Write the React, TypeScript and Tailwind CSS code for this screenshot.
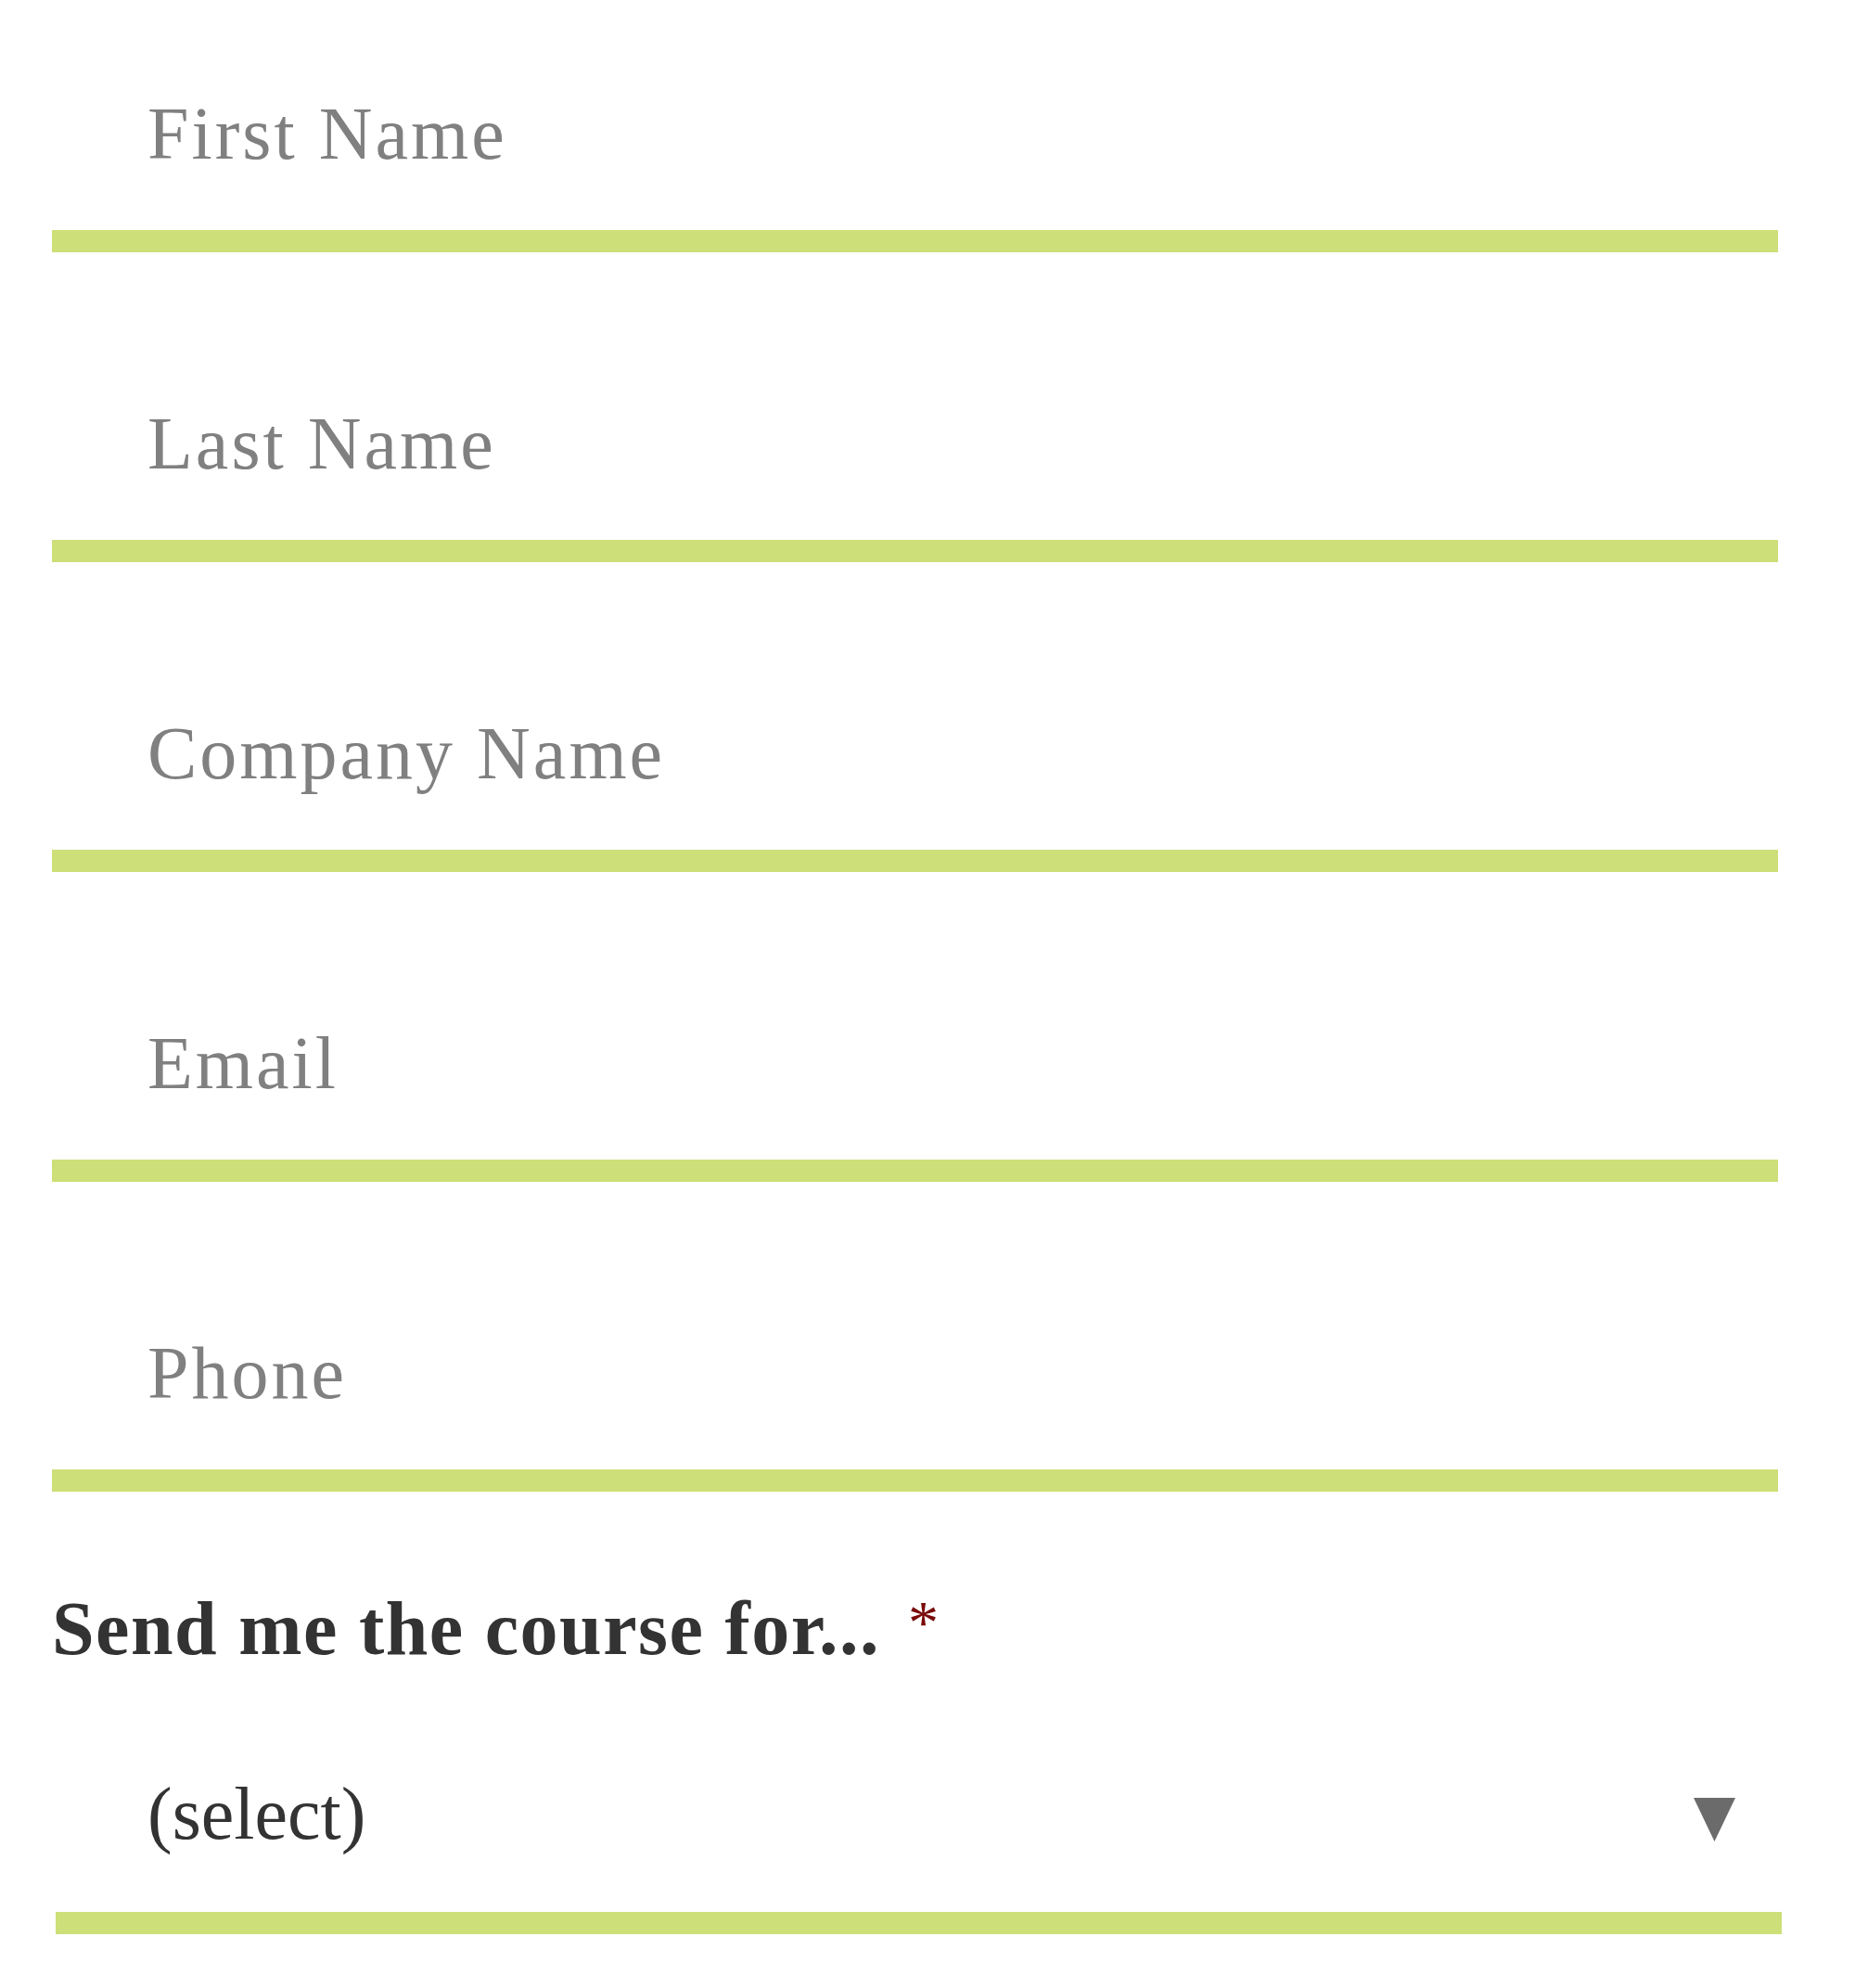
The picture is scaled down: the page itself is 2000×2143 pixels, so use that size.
import React from 'react';

const FIELDS = ['First Name', 'Last Name', 'Company Name', 'Email', 'Phone'];

const serif = "font-['Liberation_Serif','Times_New_Roman',serif]";

function TextField({ placeholder }: { placeholder: string }) {
  return (
    <input
      type="text"
      placeholder={placeholder}
      className={`${serif} block h-[232px] w-[1861px] border-0 border-b-[24px] border-solid border-[#cddf78] bg-transparent pl-[103px] text-[80px] tracking-[3px] text-[#333] outline-none placeholder:text-[#808080]`}
    />
  );
}

function CourseSelect() {
  return (
    <div
      className={`${serif} ml-[4px] mt-[94px] flex w-[1861px] justify-between border-b-[24px] border-[#cddf78] pb-[56px] pl-[99px] pr-[50px]`}
    >
      <span className="text-[80px] leading-[100px] text-[#333]">(select)</span>
      <svg width="45" height="47" viewBox="0 0 45 47" className="mt-[33px] shrink-0" aria-hidden>
        <polygon points="0,0 45,0 22.5,47" fill="#6b6b6b" />
      </svg>
    </div>
  );
}

export default function App() {
  return (
    <div className="min-h-[2143px] w-[2000px] bg-white pl-[56px] pt-[40px]">
      <div className="flex flex-col gap-[102px]">
        {FIELDS.map((f) => (
          <TextField key={f} placeholder={f} />
        ))}
      </div>
      <div className={`${serif} mt-[98px] flex items-baseline text-[82px] font-bold leading-[100px] tracking-[1.5px] text-[#333]`}>
        <span>Send me the course for...</span>
        <span className="relative -top-[12px] ml-[30px] text-[66px] font-normal text-[#7a0a0a]">*</span>
      </div>
      <CourseSelect />
    </div>
  );
}
